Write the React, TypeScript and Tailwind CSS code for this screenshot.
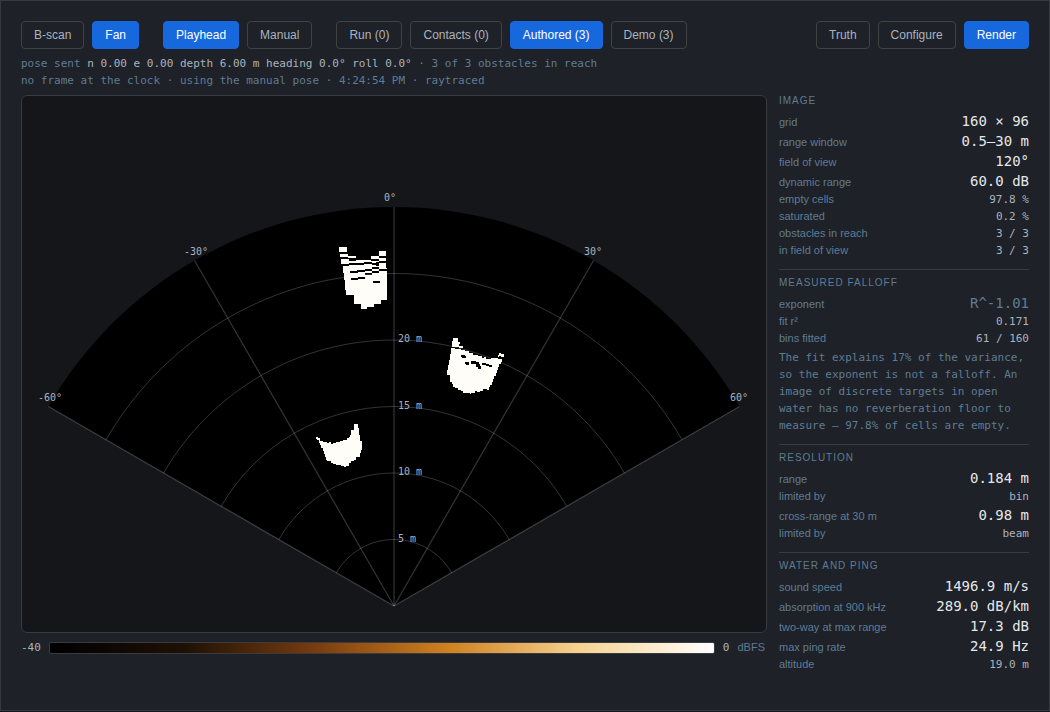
import clsx from "clsx";
import type { ReactNode } from "react";

const APEX = { x: 372, y: 510 };
const RADIUS = 399;
const MAX_RANGE = 30;

const toX = (r: number, deg: number) => APEX.x + r * Math.sin((deg * Math.PI) / 180);
const toY = (r: number, deg: number) => APEX.y - r * Math.cos((deg * Math.PI) / 180);

const arc = (r: number) =>
  `M${toX(r, -60)} ${toY(r, -60)}A${r} ${r} 0 0 1 ${toX(r, 60)} ${toY(r, 60)}`;

const ranges = [
  { m: 5, label: "5 m" },
  { m: 10, label: "10 m" },
  { m: 15, label: "15 m" },
  { m: 20, label: "20 m" },
  { m: 25, label: "" },
];

const bearings = [
  { deg: -60, label: "-60°", x: 16, y: 305 },
  { deg: -30, label: "-30°", x: 162, y: 159 },
  { deg: 0, label: "0°", x: 362, y: 105 },
  { deg: 30, label: "30°", x: 562, y: 159 },
  { deg: 60, label: "60°", x: 708, y: 305 },
];

type ButtonProps = { active?: boolean; children: ReactNode };

function Button({ active, children }: ButtonProps) {
  return (
    <button
      type="button"
      aria-pressed={active}
      className={clsx(
        "h-7 rounded border px-3 text-xs whitespace-nowrap",
        active ? "border-[#1668dc] bg-[#1668dc] text-white" : "border-[#424242] text-[#abb3bf]",
      )}
    >
      {children}
    </button>
  );
}

type RowProps = { label: string; value: string; big?: boolean; muted?: boolean };

function Row({ label, value, big, muted }: RowProps) {
  return (
    <div className={clsx("flex items-baseline justify-between", big ? "h-5 leading-5" : "h-[17px] leading-[17px]")}>
      <dt className="text-[#5f7c95]">{label}</dt>
      <dd
        className={clsx(
          "font-['DejaVu_Sans_Mono',monospace]",
          big ? "text-sm leading-5" : "text-[11px]",
          muted ? "text-[#5f7c95]" : big ? "text-[#e5e8eb]" : "text-[#abb3bf]",
        )}
      >
        {value}
      </dd>
    </div>
  );
}

type SectionProps = { title: string; rows: RowProps[]; note?: string };

function Section({ title, rows, note }: SectionProps) {
  return (
    <section className="border-t border-[#383b40] pt-[7px] pb-2.5 first:border-t-0 first:pt-0">
      <h2 className="mb-[5px] text-[10px] leading-[11px] tracking-[1px] text-[#5f7c95] uppercase">{title}</h2>
      <dl>
        {rows.map((row, i) => (
          <Row key={i} {...row} />
        ))}
      </dl>
      {note && (
        <p className="mt-0.5 font-['DejaVu_Sans_Mono',monospace] leading-[17px] text-[#5f7c95]">{note}</p>
      )}
    </section>
  );
}

function Echoes() {
  return (
    <g shapeRendering="crispEdges" fill="#fffdf8">
      <g transform="translate(298 134)">
        <path d="M19 17H27V22H19ZM20 24H28V26H36V28H28V27H20ZM21 29H29V31H36V30H51V26H59V21H66V38H67V70H61V74H54V77H47V79H41V74H34V65H26V60H25V50H24V43H23V36H22V34H21Z" />
        <path
          fill="#000"
          d="M59 26H66V28H59ZM51 29H59V31H51ZM22 34H29V33H44V32H52V34H44V35H29V36H22ZM52 33H56V32H59V31H67V33H59V36H56V35H52ZM30 41H37V40H45V39H52V41H45V42H38V43H30ZM52 37H59V39H52ZM31 48H38V47H45V49H38V50H31ZM45 43H52V41H59V39H67V41H59V43H52V45H45ZM53 51H60V53H53Z"
        />
      </g>
      <g transform="translate(408 229) scale(0.33333)">
        <path d="M68 40H83V52H90V58H86V62H100V68H88V66H65V49H68ZM203 90H207V84H214V88H221V96H214V92H208V96H203ZM62 68H75V72H93V75H105V79H118V84H130V89H143V94H156V99H162V95H168V101H182V98H203V103H215V110H212V118H208V126H205V135H201V144H197V153H193V162H189V171H185V180H181V187H178V195H172V192H160V198H150V201H140V198H135V204H124V207H119V203H100V199H92V195H84V190H76V185H68V177H65V172H59V160H60V150H50V135H53V120H57V104H60V87H62Z" />
        <path
          fill="#000"
          d="M93 90H105V94H108V100H97V96H93ZM105 112H118V119H107V116H105ZM123 108H137V112H146V116H141V118H150V123H153V131H143V127H137V116H123ZM155 113H168V116H177V120H186V127H177V124H168V120H155Z"
        />
      </g>
      <g transform="translate(278 314) scale(0.33333)">
        <path d="M163 42H173V54H178V76H181V92H185V108H187V120H182V128H179V141H169V150H163V154H154V160H147V167H139V172H132V168H124V166H108V163H100V158H93V153H82V149H78V141H75V133H71V124H68V115H64V106H60V99H56V91H51V87H47V80H53V83H61V92H70V96H80V98H88V96H92V102H100V98H108V96H119V92H128V89H141V85H146V80H151V76H154V61H163Z" />
      </g>
    </g>
  );
}

function Fan() {
  return (
    <svg viewBox="0 0 744 536" className="block h-auto w-full" role="img" aria-label="Sonar fan display">
      <path d={`${arc(RADIUS)}L${APEX.x} ${APEX.y}Z`} fill="#000" />
      <Echoes />
      <g fill="none" stroke="#fff" strokeOpacity="0.2">
        {ranges.map(({ m }) => (
          <path key={m} d={arc((RADIUS * m) / MAX_RANGE)} />
        ))}
        {bearings.map(({ deg }) => (
          <path key={deg} strokeWidth={1.25} d={`M${APEX.x} ${APEX.y}L${toX(RADIUS, deg)} ${toY(RADIUS, deg)}`} />
        ))}
      </g>
      <g className="font-['DejaVu_Sans_Mono',monospace] text-[10px]" fill="#abb3bf">
        {ranges.map(({ m, label }) => (
          <text key={m} x={376} y={Math.round(APEX.y - (RADIUS * m) / MAX_RANGE) + 2}>
            {label}
          </text>
        ))}
        {bearings.map(({ deg, label, x, y }) => (
          <text key={deg} x={x} y={y}>
            {label}
          </text>
        ))}
      </g>
    </svg>
  );
}

const sections: SectionProps[] = [
  {
    title: "Image",
    rows: [
      { label: "grid", value: "160 × 96", big: true },
      { label: "range window", value: "0.5–30 m", big: true },
      { label: "field of view", value: "120°", big: true },
      { label: "dynamic range", value: "60.0 dB", big: true },
      { label: "empty cells", value: "97.8 %" },
      { label: "saturated", value: "0.2 %" },
      { label: "obstacles in reach", value: "3 / 3" },
      { label: "in field of view", value: "3 / 3" },
    ],
  },
  {
    title: "Measured falloff",
    rows: [
      { label: "exponent", value: "R^-1.01", big: true, muted: true },
      { label: "fit r²", value: "0.171" },
      { label: "bins fitted", value: "61 / 160" },
    ],
    note: "The fit explains 17% of the variance, so the exponent is not a falloff. An image of discrete targets in open water has no reverberation floor to measure — 97.8% of cells are empty.",
  },
  {
    title: "Resolution",
    rows: [
      { label: "range", value: "0.184 m", big: true },
      { label: "limited by", value: "bin" },
      { label: "cross-range at 30 m", value: "0.98 m", big: true },
      { label: "limited by", value: "beam" },
    ],
  },
  {
    title: "Water and ping",
    rows: [
      { label: "sound speed", value: "1496.9 m/s", big: true },
      { label: "absorption at 900 kHz", value: "289.0 dB/km", big: true },
      { label: "two-way at max range", value: "17.3 dB", big: true },
      { label: "max ping rate", value: "24.9 Hz", big: true },
      { label: "altitude", value: "19.0 m" },
    ],
  },
];

export default function App() {
  return (
    <div className="flex min-h-screen bg-[#141619] pb-px font-['Liberation_Sans',Arial,sans-serif]">
      <main className="flex-1 border border-[#36393f] bg-[#1e2127] p-5">
        <header className="flex flex-wrap justify-between gap-2">
          <div className="flex flex-wrap gap-6">
            <div className="flex gap-2">
              <Button>B-scan</Button>
              <Button active>Fan</Button>
            </div>
            <div className="flex gap-2">
              <Button active>Playhead</Button>
              <Button>Manual</Button>
            </div>
            <div className="flex gap-2">
              <Button>Run (0)</Button>
              <Button>Contacts (0)</Button>
              <Button active>Authored (3)</Button>
              <Button>Demo (3)</Button>
            </div>
          </div>
          <div className="flex gap-2">
            <Button>Truth</Button>
            <Button>Configure</Button>
            <Button active>Render</Button>
          </div>
        </header>

        <div className="my-1.5 font-['DejaVu_Sans_Mono',monospace] text-[11px] leading-[17px] text-[#5f7c95]">
          <p>
            pose sent <span className="text-[#abb3bf]">n 0.00 e 0.00 depth 6.00 m heading 0.0° roll 0.0°</span> · 3 of 3
            obstacles in reach
          </p>
          <p>no frame at the clock · using the manual pose · 4:24:54 PM · raytraced</p>
        </div>

        <div className="flex items-start gap-3">
          <div className="min-w-0 flex-1">
            <div className="overflow-hidden rounded-md border border-[#383b40] bg-[#141619]">
              <Fan />
            </div>
            <div className="mt-1.5 flex items-center gap-2 pr-0.5 text-[11px] leading-[17px]">
              <span className="font-['DejaVu_Sans_Mono',monospace] text-[#abb3bf]">-40</span>
              <div className="h-3 flex-1 rounded-xs border border-[#383b40] bg-[linear-gradient(to_right,#000,#1e1006_20%,#783c0e_40%,#d08020_60%,#f7d391_80%,#fff)]" />
              <span className="font-['DejaVu_Sans_Mono',monospace] text-[#abb3bf]">0</span>
              <span className="text-[#5f7c95]">dBFS</span>
            </div>
          </div>

          <aside className="w-[250px] shrink-0 text-[11px]">
            {sections.map((section) => (
              <Section key={section.title} {...section} />
            ))}
          </aside>
        </div>
      </main>
    </div>
  );
}
